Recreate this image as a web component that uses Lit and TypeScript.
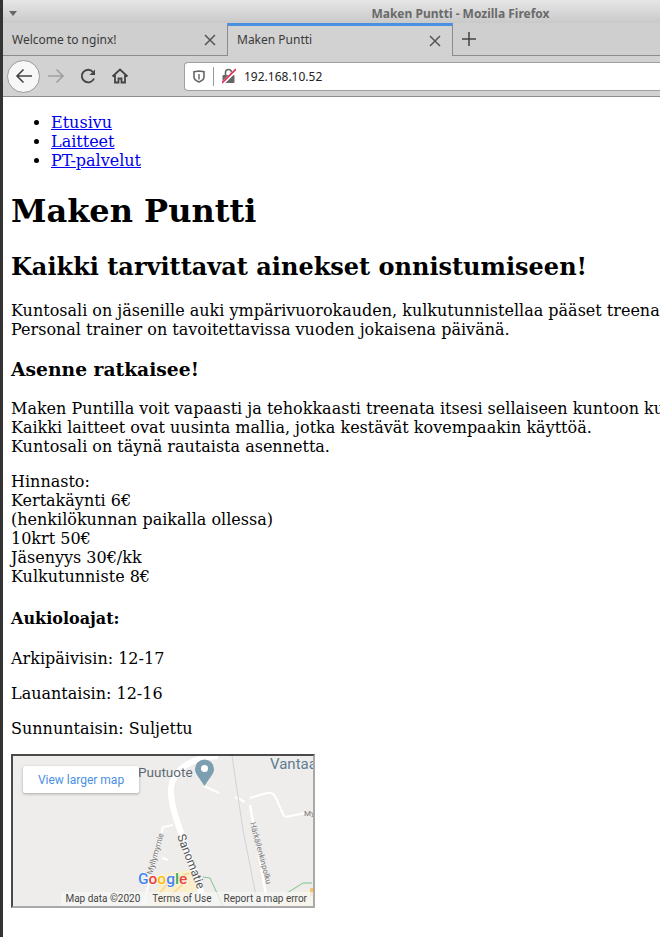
import { LitElement, html, css, svg } from "lit";
import { customElement } from "lit/decorators.js";

@customElement("app-root")
export class AppRoot extends LitElement {
  static styles = css`
    :host { display: block; width: 660px; height: 937px; overflow: hidden; background: #fff; position: relative; }
    .win { display: flex; flex-direction: column; height: 937px; border-left: 3px solid #333; box-sizing: border-box; }
    .chrome { font-family: "Noto Sans", "Open Sans", sans-serif; font-size: 12px; color: #3a3a3a; flex: none; }
    .title { height: 23px; background: linear-gradient(#e6e6e6, #c9c9c9); position: relative; display: flex; align-items: center; justify-content: center; padding-top: 3px; box-sizing: border-box; }
    .title b { font-weight: 700; color: #6a6a6a; font-size: 12px; margin-left: 258px; }
    .menu { position: absolute; left: 6px; top: 11px; width: 0; height: 0; border: 4px solid transparent; border-top: 5px solid #666; }
    .tabs { height: 33px; background: #cfcfcf; display: flex; box-sizing: border-box; border-bottom: 1px solid #8c8c8c; }
    .tab { display: flex; align-items: center; justify-content: space-between; box-sizing: border-box; padding: 0 11px 0 9px; }
    .tab svg { margin-top: 2px; }
    .tab1 { width: 224px; }
    .tab2 { width: 226px; height: 33px; border-top: 3px solid #4a90e0; border-left: 1px solid #8c8c8c; border-right: 1px solid #8c8c8c; background: #d2d2d2; padding-bottom: 3px; }
    .plus { display: flex; align-items: center; margin-left: 8px; }
    .nav { height: 41px; background: #d2d2d2; display: flex; align-items: center; border-bottom: 1px solid #8e8e8e; box-sizing: border-box; padding-left: 4px; }
    .back { width: 33px; height: 33px; border-radius: 50%; background: #f7f7f7; border: 1px solid #9a9a9a; box-sizing: border-box; display: flex; align-items: center; justify-content: center; flex: none; }
    .nb { width: 32px; display: flex; justify-content: center; flex: none; }
    .url { margin-left: 48px; flex: 1; height: 29px; background: #fff; border: 1px solid #a0a0a0; border-right: none; border-radius: 4px 0 0 4px; display: flex; align-items: center; box-sizing: border-box; padding-left: 8px; color: #222; }
    .sep { width: 1px; height: 19px; background: #999; margin: 0 8px; flex: none; }
    .urltxt { margin-left: 8px; }
    .page { flex: 1; overflow: hidden; font-family: "DejaVu Serif", serif; font-size: 16px; color: #000; padding: 16px 0 0 8px; white-space: nowrap; }
    ul { margin: 0 0 16px; padding-left: 40px; }
    a { color: #0000ee; }
    h1 { font-size: 32px; margin: 22px 0 23px; line-height: 38px; }
    h2 { font-size: 24px; margin: 20px 0; line-height: 28px; }
    h3 { font-size: 18.72px; margin: 19px 0; line-height: 22px; }
    h4 { font-size: 16px; margin: 22.6px 0 21px; line-height: 19px; }
    p { margin: 16px 0; line-height: 19px; }
    p.tight { margin-top: 17px; margin-bottom: 17px; line-height: 18.9px; }
    .map { position: relative; display: block; width: 304px; height: 154px; box-sizing: border-box; border: 2px solid; border-color: #4a4a4a #a9a9a9 #a9a9a9 #4a4a4a; background: #eeedec; overflow: hidden; font-family: Roboto, sans-serif; margin-top: 16px; }
    .map svg { position: absolute; left: 0; top: 0; }
    .larger { position: absolute; left: 10px; top: 10px; width: 116px; height: 27px; background: #fff; border-radius: 2px; box-shadow: 0 1px 3px rgba(0,0,0,.3); color: #4a90e2; font-size: 12px; display: flex; align-items: center; justify-content: center; }
    .foot { position: absolute; right: 0; bottom: 0; height: 14px; display: flex; gap: 12px; padding: 0 6px 0 4px; background: rgba(245,245,245,.75); color: #444; font-size: 10px; line-height: 14px; }
  `;

  render() {
    return html`<div class="win">
      <div class="chrome">
        <div class="title"><span class="menu"></span><b>Maken Puntti - Mozilla Firefox</b></div>
        <div class="tabs">
          <div class="tab tab1"><span>Welcome to nginx!</span>${this.x()}</div>
          <div class="tab tab2"><span>Maken Puntti</span>${this.x()}</div>
          <div class="plus"><svg width="16" height="16" viewBox="0 0 16 16"><path d="M8 1v14M1 8h14" stroke="#444" stroke-width="1.5"/></svg></div>
        </div>
        <div class="nav">
          <div class="back"><svg width="18" height="18" viewBox="0 0 18 18" fill="none" stroke="#444" stroke-width="1.6"><path d="M17 9H2M8.500 2.500 2 9l6.500 6.500"/></svg></div>
          <div class="nb"><svg width="18" height="18" viewBox="0 0 18 18" fill="none" stroke="#a0a0a0" stroke-width="1.6"><path d="M1 9h15M9.500 2.500 16 9l-6.500 6.500"/></svg></div>
          <div class="nb"><svg width="18" height="18" viewBox="0 0 18 18" fill="none" stroke="#444" stroke-width="1.9"><path d="M15 11.500a6.300 6.300 0 1 1-1-6.500"/><path d="M16 2.500V8h-5.500z" fill="#444" stroke="none"/></svg></div>
          <div class="nb"><svg width="18" height="18" viewBox="0 0 18 18" fill="none" stroke="#444" stroke-width="1.800"><path d="M1.500 9.500 9 2.500l7.500 7M4 8v7.500h3.500v-4h3v4H14V8"/></svg></div>
          <div class="url">
            <svg width="12" height="13" viewBox="0 0 12 13" style="flex:none"><path d="M1 1.800 6 1l5 .8V7c0 2.500-2.500 4-5 5C3.500 11 1 9.500 1 7z" fill="none" stroke="#666" stroke-width="1.600"/><path d="M5.200 4h1.600v5.500H5.200z" fill="#777"/></svg>
            <span class="sep"></span>
            <svg width="14" height="16" viewBox="0 0 14 16" style="flex:none"><rect x="0.500" y="7" width="12" height="8" rx="1" fill="#666"/><path d="M3.500 7V4.500a3 3 0 0 1 6 0V7" fill="none" stroke="#666" stroke-width="1.600"/><path d="M0 16 14 2" stroke="#fff" stroke-width="3.400"/><path d="M0 15 14 1" stroke="#e22850" stroke-width="1.600"/></svg>
            <span class="urltxt">192.168.10.52</span>
          </div>
        </div>
      </div>
      <div class="page">
        <ul>
          <li><a href="#">Etusivu</a></li>
          <li><a href="#">Laitteet</a></li>
          <li><a href="#">PT-palvelut</a></li>
        </ul>
        <h1>Maken Puntti</h1>
        <h2>Kaikki tarvittavat ainekset onnistumiseen!</h2>
        <p>Kuntosali on jäsenille auki ympärivuorokauden, kulkutunnistellaa pääset treenaamaan milloin vain.<br>Personal trainer on tavoitettavissa vuoden jokaisena päivänä.</p>
        <h3>Asenne ratkaisee!</h3>
        <p>Maken Puntilla voit vapaasti ja tehokkaasti treenata itsesi sellaiseen kuntoon kuin haluat.<br>Kaikki laitteet ovat uusinta mallia, jotka kestävät kovempaakin käyttöä.<br>Kuntosali on täynä rautaista asennetta.</p>
        <p class="tight">Hinnasto:<br>Kertakäynti 6€<br>(henkilökunnan paikalla ollessa)<br>10krt 50€<br>Jäsenyys 30€/kk<br>Kulkutunniste 8€</p>
        <h4>Aukioloajat:</h4>
        <p>Arkipäivisin: 12-17</p>
        <p>Lauantaisin: 12-16</p>
        <p>Sunnuntaisin: Suljettu</p>
        <div class="map">
          ${this.mapSvg()}
          <div class="larger">View larger map</div>
          <div class="foot"><span>Map data ©2020</span><span>Terms of Use</span><span>Report a map error</span></div>
        </div>
      </div>
    </div>`;
  }

  x() {
    return html`<svg width="12" height="12" viewBox="0 0 12 12"><path d="M1 1l10 10M11 1 1 11" stroke="#555" stroke-width="1.500"/></svg>`;
  }

  mapSvg() {
    return svg`<svg width="300" height="150" viewBox="0 0 300 150" xmlns="http://www.w3.org/2000/svg" style="font-family:Roboto,sans-serif">
      <path d="M137 150 L150 118 L177 114 L184 134 L160 150z" fill="#fbeecb"/>
      <path d="M146 138 L156 126M152 145 L170 128M164 122 L176 117" stroke="#f9d68f" stroke-width="1.500" fill="none"/>
      <path d="M250 150 L285 138 L300 133 V150z" fill="#fbeec9"/>
      <path d="M297 132h3v8h-3z" fill="#f5c26b"/>
      <path d="M205 0C175 2 160 15 158 32C157 42 160 52 163 62L193 150" fill="none" stroke="#fff" stroke-width="6"/>
      <path d="M160 69 150 71 130 150" fill="none" stroke="#fff" stroke-width="2"/>
      <path d="M149 102 155 104" fill="none" stroke="#fff" stroke-width="2"/>
      <path d="M191 30 206 37" fill="none" stroke="#fff" stroke-width="2"/>
      <path d="M237 42 254 37C259 36 261 38 263 42L270 58C271 61 273 61 275 60.500L292 57" fill="none" stroke="#fff" stroke-width="2"/>
      <path d="M222 41 232 46" fill="none" stroke="#fff" stroke-width="2"/>
      <path d="M237 49 255 150" fill="none" stroke="#fff" stroke-width="2.500"/>
      <path d="M219 0 230 74 245 150" fill="none" stroke="#cfd2d6" stroke-width="1"/>
      <path d="M190 121 197 122 210 150M274 137 290 127 299 127" fill="none" stroke="#7cc48a" stroke-width="1"/>
      <text x="125" y="21" font-size="13.500" fill="#5f6b73">Puutuote</text>
      <path d="M191.500 30C186 21 182 18 182 13a9.500 9.500 0 0 1 19 0C201 18 197 21 191.500 30z" fill="#7b9eb0"/>
      <circle cx="191.500" cy="12.500" r="3.500" fill="#fff"/>
      <text x="257" y="13" font-size="15" fill="#5f7d8f">Vantaa</text>
      <text x="291" y="60" font-size="8" fill="#777">My</text>
      <text transform="translate(164 80) rotate(69)" font-size="12" fill="#555">Sanomatie</text>
      <text transform="translate(139 119) rotate(-74)" font-size="8" fill="#777">Myllymyrnie</text>
      <text transform="translate(237 67) rotate(75)" font-size="8" fill="#777">Härkäilenkinpolku</text>
      <text x="125" y="128" font-size="15.500" font-family="Roboto, sans-serif" font-weight="500" stroke="#fff" stroke-width="1" paint-order="stroke"><tspan fill="#4285f4">G</tspan><tspan fill="#ea4335">o</tspan><tspan fill="#fbbc05">o</tspan><tspan fill="#4285f4">g</tspan><tspan fill="#34a853">l</tspan><tspan fill="#ea4335">e</tspan></text>
    </svg>`;
  }
}
